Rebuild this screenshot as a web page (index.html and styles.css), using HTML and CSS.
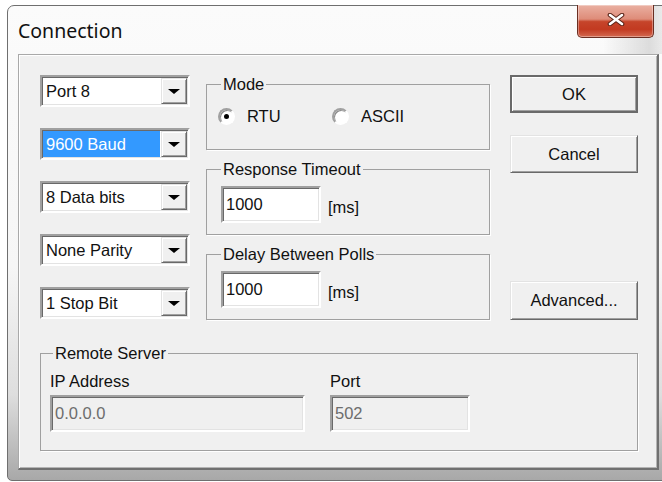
FILE: index.html
```html
<!DOCTYPE html>
<html lang="en">
<head>
<meta charset="utf-8">
<title>Connection</title>
<link rel="stylesheet" href="styles.css">
</head>
<body>
<div class="window">
  <div class="titlebar">
    <span class="title">Connection</span>
    <button class="close" aria-label="Close">
      <svg width="18" height="13" viewBox="0 0 18 13">
        <path d="M3 2 L15 11 M15 2 L3 11" stroke="#5a2418" stroke-width="4.6" stroke-linecap="round" fill="none"/>
        <path d="M3 2 L15 11 M15 2 L3 11" stroke="#ffffff" stroke-width="2.6" stroke-linecap="round" fill="none"/>
      </svg>
    </button>
  </div>

  <div class="client">
    <div class="main">
      <div class="combos">
        <div class="combo"><span class="combo-text">Port 8</span><span class="drop"><i class="arrow"></i></span></div>
        <div class="combo"><span class="combo-text selected">9600 Baud</span><span class="drop"><i class="arrow"></i></span></div>
        <div class="combo"><span class="combo-text">8 Data bits</span><span class="drop"><i class="arrow"></i></span></div>
        <div class="combo"><span class="combo-text">None Parity</span><span class="drop"><i class="arrow"></i></span></div>
        <div class="combo"><span class="combo-text">1 Stop Bit</span><span class="drop"><i class="arrow"></i></span></div>
      </div>

      <div class="groups">
        <fieldset class="group">
          <legend>Mode</legend>
          <div class="radios">
            <label class="radio first"><span class="dot checked"></span>RTU</label>
            <label class="radio"><span class="dot"></span>ASCII</label>
          </div>
        </fieldset>
        <fieldset class="group">
          <legend>Response Timeout</legend>
          <div class="field-row">
            <div class="edit short">1000</div>
            <span class="unit">[ms]</span>
          </div>
        </fieldset>
        <fieldset class="group">
          <legend>Delay Between Polls</legend>
          <div class="field-row">
            <div class="edit short">1000</div>
            <span class="unit">[ms]</span>
          </div>
        </fieldset>
      </div>

      <div class="buttons">
        <button class="btn default">OK</button>
        <button class="btn">Cancel</button>
        <button class="btn advanced">Advanced...</button>
      </div>
    </div>

    <fieldset class="group remote">
      <legend>Remote Server</legend>
      <div class="remote-fields">
        <div class="field ip">
          <span class="caption">IP Address</span>
          <div class="edit disabled">0.0.0.0</div>
        </div>
        <div class="field port">
          <span class="caption">Port</span>
          <div class="edit disabled">502</div>
        </div>
      </div>
    </fieldset>
  </div>
</div>
</body>
</html>
```

FILE: styles.css
```css
html, body {
  margin: 0;
  width: 662px;
  height: 482px;
  overflow: hidden;
  background: #ffffff;
}

body {
  font-family: "Liberation Sans", Arial, sans-serif;
  font-size: 16.5px;
  color: #111;
}

/* ---- window frame ---- */
.window {
  box-sizing: border-box;
  margin: 5px 0 0 7px;
  width: 663px;
  height: 476px;
  border: 1px solid #6f6f6f;
  border-radius: 7px 7px 5px 5px;
  background: linear-gradient(to bottom, #fbfbfb 0%, #f6f6f6 55%, #dedede 82%, #a8a8a8 100%);
  padding: 0 10px 10px 10px;
  display: flex;
  flex-direction: column;
}

.titlebar {
  height: 48px;
  flex: none;
  display: flex;
  justify-content: space-between;
  align-items: flex-start;
  margin: 0 -10px;
  padding: 0 0 0 10px;
  background: linear-gradient(to right, rgba(0,0,0,0) 90%, rgba(0,0,0,0.12) 97%, rgba(0,0,0,0.04) 100%);
}

.title {
  font-family: "Noto Sans", "Open Sans", sans-serif;
  font-size: 19.5px;
  line-height: 24px;
  margin-top: 13px;
  color: #111;
}

.close {
  box-sizing: border-box;
  width: 77px;
  height: 33px;
  margin: -1px 15px 0 0;
  padding: 0;
  border: 1px solid #6a2e22;
  border-top: none;
  border-radius: 0 0 5px 5px;
  background: linear-gradient(to bottom, #eab0a2 0%, #de8c79 44%, #c6452b 52%, #c23a21 76%, #d36a51 100%);
  box-shadow: inset 0 0 0 1px rgba(255,255,255,0.35);
  display: flex;
  align-items: center;
  justify-content: center;
}

.close svg {
  display: block;
  margin-top: -3px;
}

/* ---- client area ---- */
.client {
  box-sizing: border-box;
  flex: 1;
  background: #f0f0f0;
  border: 1px solid;
  border-width: 1px 2px 2px 1px;
  border-color: #a9a9a9 #707070 #707070 #a9a9a9;
  box-shadow: inset 1px 1px 0 #fff, inset -1px -1px 0 #b4b4b4;
  padding: 20px 19px 0 21px;
}

.main {
  display: flex;
  align-items: stretch;
}

/* ---- combo boxes ---- */
.combos {
  width: 150px;
  display: flex;
  flex-direction: column;
  gap: 21px;
}

.combo,
.edit {
  box-sizing: border-box;
  border: 2px solid;
  border-color: #a0a0a0 #ffffff #ffffff #a0a0a0;
  box-shadow: inset 1px 1px 0 #696969, inset -1px -1px 0 #e3e3e3;
  background: #fff;
}

.combo {
  height: 32px;
  padding: 1px;
  display: flex;
}

.combo-text {
  flex: 1;
  line-height: 26px;
  padding-left: 3px;
  margin-right: 1px;
  white-space: nowrap;
}

.combo-text.selected {
  background: #3399ff;
  color: #fff;
}

.drop {
  box-sizing: border-box;
  width: 26px;
  height: 26px;
  background: #f0f0f0;
  border: 1px solid;
  border-color: #e3e3e3 #696969 #696969 #e3e3e3;
  box-shadow: inset 1px 1px 0 #fff, inset -1px -1px 0 #a0a0a0;
  display: flex;
  align-items: center;
  justify-content: center;
}

.arrow {
  width: 0;
  height: 0;
  border-left: 6px solid transparent;
  border-right: 6px solid transparent;
  border-top: 5px solid #000;
  margin-top: 1px;
}

/* ---- group boxes ---- */
.group {
  box-sizing: border-box;
  margin: 0;
  padding: 0 14px;
  border: 1px solid #a0a0a0;
  box-shadow: 1px 1px 0 #fff;
  min-width: 0;
}

.group legend {
  padding: 0 2px;
  line-height: 19px;
}

.groups {
  width: 284px;
  margin-left: 16px;
  display: flex;
  flex-direction: column;
  gap: 10px;
}

.groups .group {
  height: 75px;
}

.radios {
  display: flex;
  margin-top: 12px;
  padding-left: 11px;
  margin-left: -14px;
}

.radio {
  display: flex;
  align-items: center;
  gap: 12px;
  line-height: 20px;
}

.radio.first {
  width: 114px;
}

.dot {
  box-sizing: border-box;
  width: 17px;
  height: 17px;
  border-radius: 50%;
  border: 2px solid;
  border-color: #a0a0a0 #ffffff #ffffff #a0a0a0;
  background: #fff;
  box-shadow: inset 1px 1px 0 #8a8a8a;
  display: flex;
  align-items: center;
  justify-content: center;
}

.dot.checked::after {
  content: "";
  width: 5px;
  height: 5px;
  border-radius: 50%;
  background: #000;
}

.field-row {
  display: flex;
  align-items: center;
  margin-top: 7px;
}

.edit {
  height: 37px;
  padding-left: 3px;
  line-height: 33px;
  white-space: nowrap;
}

.edit.short {
  width: 100px;
}

.unit {
  margin-left: 7px;
  margin-top: 6px;
}

/* ---- push buttons ---- */
.buttons {
  width: 128px;
  margin-left: 20px;
  display: flex;
  flex-direction: column;
}

.btn {
  box-sizing: border-box;
  width: 128px;
  height: 38px;
  padding: 0;
  font: inherit;
  color: #111;
  background: #f0f0f0;
  border: 1px solid;
  border-color: #e3e3e3 #696969 #696969 #e3e3e3;
  box-shadow: inset 1px 1px 0 #fff, inset -1px -1px 0 #a0a0a0;
}

.btn + .btn {
  margin-top: 22px;
}

.btn.default {
  border: 2px solid #6a6a6a;
  box-shadow: inset 1px 1px 0 #fff, inset -1px -1px 0 #a0a0a0;
}

.btn.advanced {
  margin-top: auto;
  height: 39px;
}

/* ---- remote server ---- */
.group.remote {
  margin-top: 24px;
  padding: 0 12px 18px 9px;
}

.group.remote legend {
  margin-left: 3px;
}

.remote-fields {
  display: flex;
  gap: 25px;
  margin-top: 9px;
}

.field {
  display: flex;
  flex-direction: column;
}

.caption {
  line-height: 19px;
  margin-bottom: 4px;
}

.field.ip .edit {
  width: 255px;
}

.field.port .edit {
  width: 140px;
}

.edit.disabled {
  background: #f0f0f0;
  color: #6d6d6d;
}
```
